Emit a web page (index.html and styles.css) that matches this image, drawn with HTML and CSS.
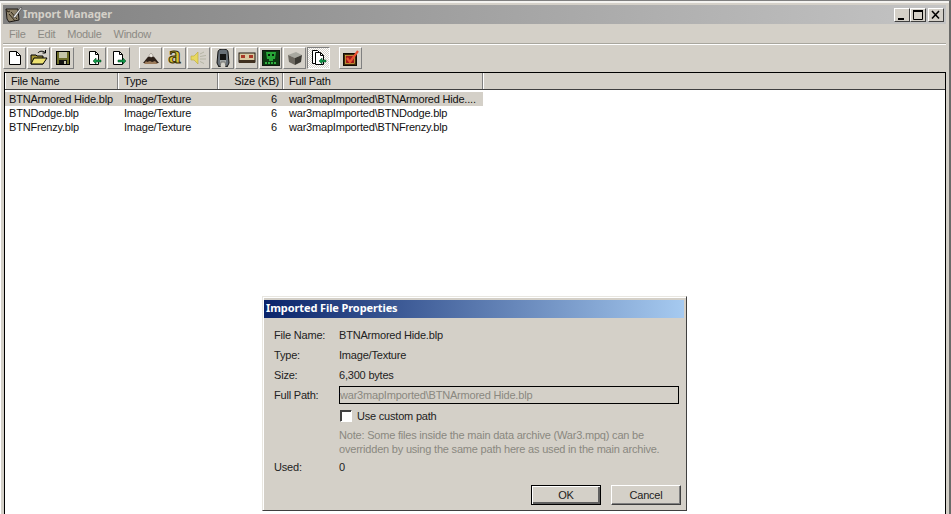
FILE: index.html
```html
<!DOCTYPE html>
<html>
<head>
<meta charset="utf-8">
<title>Import Manager</title>
<link rel="stylesheet" href="styles.css">
</head>
<body>
<div class="window">
  <div class="titlebar">
    <svg class="app-icon" width="18" height="18" viewBox="0 0 18 18"><path d="M1 3h3l9 0 1 11-10 2-2-3z" fill="#8c8068" stroke="#1c1814"/><path d="M1 3l2 3 2-1M4 8l6 7M6 6l6 7" fill="none" stroke="#2c2418"/><path d="M8 11L16 1l1 1-7 10z" fill="#eee" stroke="#333" stroke-width=".6"/></svg>
    <span class="title-text">Import Manager</span>
    <div class="caption-btns">
      <span class="cap"><svg width="14" height="12" viewBox="0 0 14 12"><rect x="3" y="9" width="6" height="2" fill="#000"/></svg></span>
      <span class="cap"><svg width="14" height="12" viewBox="0 0 14 12"><path d="M2.500 1.500h9v9h-9z" fill="none" stroke="#000"/><rect x="2" y="1" width="10" height="2" fill="#000"/></svg></span>
      <span class="cap cap-close"><svg width="14" height="12" viewBox="0 0 14 12"><path d="M3 2l7 7.500M10 2l-7 7.500" stroke="#000" stroke-width="1.600"/></svg></span>
    </div>
  </div>
  <div class="menubar">
    <span class="menu">File</span><span class="menu">Edit</span><span class="menu">Module</span><span class="menu">Window</span>
  </div>
  <div class="toolbar">
    <div class="tgroup">
      <span class="tbtn"><svg width="16" height="16" viewBox="0 0 16 16"><path d="M2.500 1.500h7l4 4v9h-11z" fill="#fff" stroke="#000"/><path d="M9.500 1.500v4h4" fill="none" stroke="#000"/></svg></span>
      <span class="tbtn"><svg width="18" height="16" viewBox="0 0 18 16"><path d="M1 5h5l1 1h6v8H1z" fill="#a89838" stroke="#000"/><path d="M1 14l3-6h13l-4 6z" fill="#ece070" stroke="#000"/><path d="M8 3c1-2 5-2.500 7-.500M15.500 0v3h-3" fill="none" stroke="#000"/></svg></span>
      <span class="tbtn"><svg width="16" height="16" viewBox="0 0 16 16"><rect x="1.500" y="1.500" width="13" height="13" fill="#6c6c28" stroke="#000"/><rect x="4" y="2" width="8" height="6" fill="#c4c4a8"/><rect x="4" y="10" width="8" height="4" fill="#141414"/><rect x="9" y="11" width="2" height="3" fill="#c4c4a8"/></svg></span>
    </div>
    <div class="tgroup">
      <span class="tbtn"><svg width="16" height="16" viewBox="0 0 16 16"><path d="M2.500 1.500h6l3 3v10h-9z" fill="#fff" stroke="#000"/><path d="M8.500 1.500v3h3" fill="none" stroke="#000"/><path d="M6 11l3-3v2h5v2H9v2z" fill="#109848" stroke="#04401c" stroke-width=".5"/></svg></span>
      <span class="tbtn"><svg width="16" height="16" viewBox="0 0 16 16"><path d="M2.500 1.500h6l3 3v10h-9z" fill="#fff" stroke="#000"/><path d="M8.500 1.500v3h3" fill="none" stroke="#000"/><path d="M15 11l-3-3v2H7v2h5v2z" fill="#109848" stroke="#04401c" stroke-width=".5"/></svg></span>
    </div>
    <div class="tgroup">
      <span class="tbtn"><svg width="18" height="14" viewBox="0 0 18 14"><path d="M1 12L9 2l8 10z" fill="#2c2018"/><path d="M9 2L6 6l2-.5 1 1 1.500-1 1.500.8z" fill="#ece8e0"/><path d="M2 13h14l-3-3-3 1-2-1-3 1-1-1z" fill="#9c7c5c"/></svg></span>
      <span class="tbtn"><span class="a-glyph">a</span></span>
      <span class="tbtn"><svg width="18" height="16" viewBox="0 0 18 16"><path d="M1 6h3l4-4v12l-4-4H1z" fill="#e8d860" stroke="#b8a838" stroke-width=".6"/><path d="M10 4l4-2M10 6.500l6-1M10 9h6M10 11.500l4 2" stroke="#b4b4a4"/></svg></span>
      <span class="tbtn"><svg width="14" height="18" viewBox="0 0 14 18"><path d="M2 3c0-2 2-3 5-3s5 1 5 3l1 11-2 4h-1l-1-5H5l-1 5H3l-2-4z" fill="#687078" stroke="#111"/><path d="M4 5h6v6H4z" fill="#141414"/><path d="M5 11v6M7 11v6M9 11v6" stroke="#d8d8d0"/></svg></span>
      <span class="tbtn"><svg width="18" height="12" viewBox="0 0 18 12"><rect x="1" y="1" width="16" height="9" fill="#d8c8a0" stroke="#201810"/><rect x="3" y="3" width="4" height="3" fill="#a83828"/><rect x="11" y="3" width="4" height="3" fill="#a83828"/><rect x="1" y="8" width="16" height="3" fill="#403020"/></svg></span>
      <span class="tbtn"><svg width="18" height="16" viewBox="0 0 18 16"><rect x=".5" y=".5" width="17" height="15" fill="#0c3810" stroke="#101810"/><path d="M4 2h10l-1 7h-2v2H7V9H5z" fill="#28a838"/><rect x="6" y="4" width="2" height="2" fill="#062008"/><rect x="10" y="4" width="2" height="2" fill="#062008"/><path d="M3 13h12" stroke="#30b040" stroke-width="2" stroke-dasharray="2 1"/></svg></span>
      <span class="tbtn"><svg width="16" height="14" viewBox="0 0 16 14"><path d="M1 4l8-3 6 3-7 3z" fill="#a8a8a0"/><path d="M1 4l7 3v7L2 11z" fill="#6c6860"/><path d="M8 7l7-3-1 7-6 3z" fill="#3c3a34"/></svg></span>
      <span class="tbtn tbtn-on"><svg width="16" height="16" viewBox="0 0 16 16"><path d="M1.500 .5h5l2 2v11h-7z" fill="#fff" stroke="#000"/><path d="M4.500 2.500h5l3 3v9h-8z" fill="#fff" stroke="#000"/><path d="M9.500 2.500v3h3" fill="none" stroke="#000"/><path d="M8 11l3-3v2h4v2h-4v2z" fill="#109848" stroke="#04401c" stroke-width=".5"/></svg></span>
    </div>
    <div class="tgroup">
      <span class="tbtn"><svg width="18" height="16" viewBox="0 0 18 16"><rect x="1.500" y="3.500" width="13" height="12" fill="#3c280c" stroke="#100c04"/><rect x="3.500" y="5.500" width="9" height="8" fill="#a01818" stroke="#d8b840" stroke-width=".7"/><path d="M5 8l3 4 8-11" fill="none" stroke="#e85030" stroke-width="2.200"/></svg></span>
    </div>
  </div>
  <div class="list">
    <div class="list-head">
      <span class="hcell col-name">File Name</span>
      <span class="hcell col-type">Type</span>
      <span class="hcell col-size">Size (KB)</span>
      <span class="hcell col-path">Full Path</span>
      <span class="hcell col-rest"></span>
    </div>
    <div class="list-body">
      <div class="row row-sel"><span class="cell col-name">BTNArmored Hide.blp</span><span class="cell col-type">Image/Texture</span><span class="cell col-size num">6</span><span class="cell col-path">war3mapImported\BTNArmored Hide....</span></div>
      <div class="row"><span class="cell col-name">BTNDodge.blp</span><span class="cell col-type">Image/Texture</span><span class="cell col-size num">6</span><span class="cell col-path">war3mapImported\BTNDodge.blp</span></div>
      <div class="row"><span class="cell col-name">BTNFrenzy.blp</span><span class="cell col-type">Image/Texture</span><span class="cell col-size num">6</span><span class="cell col-path">war3mapImported\BTNFrenzy.blp</span></div>
    </div>
  </div>
</div>

<div class="dialog">
  <div class="dlg-title">Imported File Properties</div>
  <div class="dlg-body">
    <div class="field"><span class="lbl">File Name:</span><span>BTNArmored Hide.blp</span></div>
    <div class="field"><span class="lbl">Type:</span><span>Image/Texture</span></div>
    <div class="field"><span class="lbl">Size:</span><span>6,300 bytes</span></div>
    <div class="field"><span class="lbl">Full Path:</span><span class="input">war3mapImported\BTNArmored Hide.blp</span></div>
    <div class="field check-row"><span class="lbl"></span><span class="check"></span><span>Use custom path</span></div>
    <div class="note">Note: Some files inside the main data archive (War3.mpq) can be<br>overridden by using the same path here as used in the main archive.</div>
    <div class="field used"><span class="lbl">Used:</span><span>0</span></div>
    <div class="dlg-btns">
      <span class="btn btn-def">OK</span>
      <span class="btn">Cancel</span>
    </div>
  </div>
</div>
</body>
</html>
```
FILE: styles.css
```css
* { box-sizing: border-box; }
html, body { margin: 0; height: 100%; overflow: hidden; }
body {
  width: 951px;
  height: 514px;
  position: relative;
  background: #d4d0c8;
  font-family: "Liberation Sans", Arial, sans-serif;
  font-size: 11px;
  letter-spacing: -0.2px;
  color: #111;
}
.window {
  height: 514px;
  padding: 4px 3px 0 3px;
  display: flex;
  flex-direction: column;
  border-top: 1px solid #808080;
  border-right: 2px solid #6a6a68;
  box-shadow: inset 0 2px 0 #f4f3f0, inset 1px 0 0 #fff;
}
.titlebar {
  height: 19px;
  display: flex;
  align-items: center;
  padding: 0 2px 0 2px;
  flex: none;
  background: linear-gradient(90deg, #808080, #c4c4c4);
}
.app-icon { flex: none; }
.title-text {
  font-family: "Noto Sans", sans-serif;
  font-weight: bold;
  font-size: 11px;
  line-height: 17px;
  padding-bottom: 2px;
  letter-spacing: -0.1px;
  color: #d4d0c8;
}
.caption-btns { margin-left: auto; display: flex; }
.cap {
  width: 16px;
  height: 14px;
  display: flex;
  align-items: center;
  justify-content: center;
  background: #d4d0c8;
  border: 1px solid;
  border-color: #fff #404040 #404040 #fff;
}
.cap-close { margin-left: 2px; }
.menubar {
  height: 20px;
  flex: none;
  display: flex;
  align-items: center;
  gap: 12px;
  padding-left: 6px;
  letter-spacing: -0.3px;
  color: #8c8a84;
  border-bottom: 1px solid #a8a69e;
  box-shadow: 0 1px 0 #fff;
}
.toolbar {
  height: 29px;
  flex: none;
  display: flex;
  gap: 9px;
  padding-top: 3px;
}
.tgroup { display: flex; gap: 1px; }
.tbtn {
  width: 23px;
  height: 22px;
  display: flex;
  align-items: center;
  justify-content: center;
  border: 1px solid;
  border-color: #fff #808080 #808080 #fff;
}
.tbtn-on {
  border-color: #808080 #fff #fff #808080;
  background-color: #fff;
  background-image: repeating-conic-gradient(#d4d0c8 0 25%, #fff 0 50%);
  background-size: 2px 2px;
}
.a-glyph {
  font-family: "Liberation Serif", serif;
  font-weight: bold;
  font-size: 25px;
  line-height: 18px;
  padding-bottom: 6px;
  color: #d8c030;
  -webkit-text-stroke: 1px #3c3208;
}
.list {
  flex: 1;
  display: flex;
  flex-direction: column;
  margin-left: 1px;
  min-height: 0;
  border: 1px solid #000;
  border-bottom: 0;
  margin-top: -1px;
}
.list-head {
  height: 17px;
  flex: none;
  display: flex;
  border-bottom: 1px solid #404040;
}
.hcell {
  display: flex;
  align-items: center;
  padding-left: 5px;
  border-left: 1px solid #fff;
  border-right: 1px solid #808080;
  white-space: nowrap;
}
.col-name { width: 113px; }
.col-type { width: 100px; }
.col-size { width: 65px; }
.col-path { width: 200px; }
.col-rest { flex: 1; border-right: 0; }
.hcell.col-size { justify-content: flex-end; padding: 0 3px 0 0; }
.list-body {
  flex: 1;
  background: #fff;
  padding-top: 2px;
}
.row {
  display: flex;
  height: 14px;
  line-height: 14px;
  width: 478px;
}
.row-sel { background: #d4d0c8; }
.cell { padding-left: 6px; white-space: nowrap; flex: none; }
.cell.col-name { padding-left: 4px; }
.cell.num { text-align: right; padding: 0 6px 0 0; }
.dialog {
  position: absolute;
  left: 262px;
  top: 296px;
  width: 425px;
  height: 215px;
  background: #d4d0c8;
  padding: 3px 2px 3px 1px;
  border: 1px solid;
  border-color: #e8e6e0 #404040 #404040 #e8e6e0;
  box-shadow: inset 1px 1px 0 #fff;
  color: #222;
}
.dlg-title {
  height: 18px;
  line-height: 16px;
  padding-left: 2px;
  font-family: "Noto Sans", sans-serif;
  font-weight: bold;
  font-size: 11px;
  letter-spacing: -0.1px;
  color: #fff;
  background: linear-gradient(90deg, #0a246a, #a6caf0);
}
.dlg-body {
  padding: 7px 0 0 10px;
  display: flex;
  flex-direction: column;
}
.field { display: flex; align-items: center; height: 20px; }
.lbl { width: 65px; flex: none; }
.input {
  width: 340px;
  height: 18px;
  line-height: 16px;
  border: 1px solid #000;
  color: #8a8880;
}
.check-row { margin-top: 1px; }
.check {
  width: 12px;
  height: 12px;
  margin: 0 5px 0 1px;
  background: #fff;
  border: 1px solid;
  border-color: #404040 #fff #fff #404040;
  box-shadow: inset 1px 1px 0 #404040;
}
.note {
  margin: 2px 0 0 65px;
  line-height: 14px;
  color: #8a8880;
}
.used { margin-top: 1px; }
.dlg-btns {
  display: flex;
  justify-content: flex-end;
  gap: 10px;
  margin: 8px 3px 0 0;
}
.btn {
  width: 70px;
  height: 20px;
  display: flex;
  align-items: center;
  justify-content: center;
  border: 1px solid;
  border-color: #fff #404040 #404040 #fff;
  box-shadow: inset -1px -1px 0 #808080;
}
.btn-def {
  border: 1px solid #000;
  box-shadow: inset 1px 1px 0 #fff, inset -2px -2px 0 #606060;
}
```
